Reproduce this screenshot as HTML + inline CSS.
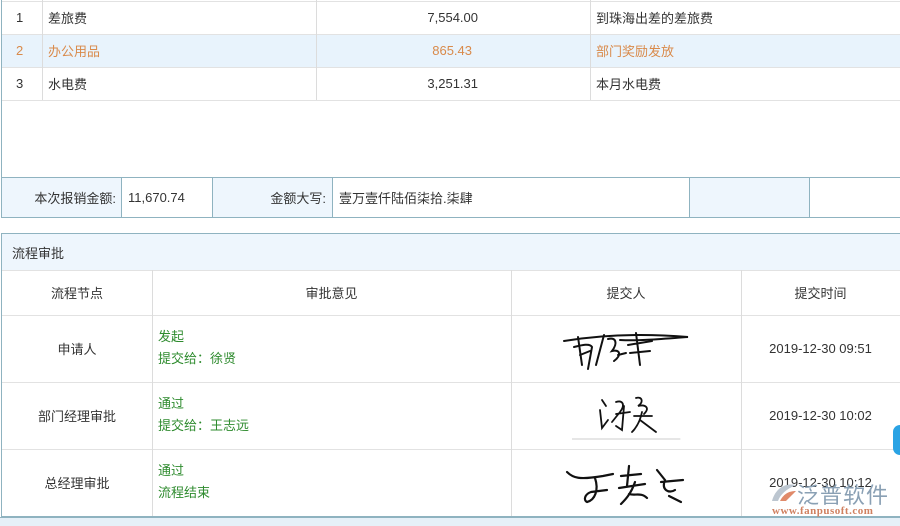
<!DOCTYPE html><html><head><meta charset="utf-8"><style>
*{margin:0;padding:0;box-sizing:border-box}
body{width:900px;height:526px;overflow:hidden;background:#fff;font-family:"Liberation Sans","Noto Sans CJK SC",sans-serif;font-size:13px;color:#333;position:relative}
.a{position:absolute}
.c{position:absolute;display:flex;align-items:center}
.hl{border-left:1px solid #dcdcdc;position:absolute}
.hz{border-top:1px solid #e2e2e2;position:absolute;left:2px;right:0}
.g{color:#2e8b2e;line-height:22px}
</style></head><body>
<!-- outer left border top section -->
<div class="a" style="left:1px;top:0;width:1px;height:217px;background:#8fb3c0"></div>
<div class="hz" style="top:1px"></div>
<div class="a" style="left:2px;top:34px;right:0;height:33px;background:#e8f3fc"></div>
<div class="hz" style="top:34px"></div><div class="hz" style="top:67px"></div><div class="hz" style="top:100px"></div>
<div class="hl" style="left:42px;top:0;height:100px"></div>
<div class="hl" style="left:316px;top:0;height:100px"></div>
<div class="hl" style="left:590px;top:0;height:100px"></div>
<div class="c" style="left:16px;top:1px;height:33px">1</div>
<div class="c" style="left:48px;top:1px;height:33px">差旅费</div>
<div class="c" style="left:316px;width:162px;justify-content:flex-end;top:1px;height:33px">7,554.00</div>
<div class="c" style="left:596px;top:1px;height:33px">到珠海出差的差旅费</div>
<div class="c" style="left:16px;top:34px;height:33px;color:#d98a4a">2</div>
<div class="c" style="left:48px;top:34px;height:33px;color:#d98a4a">办公用品</div>
<div class="c" style="left:316px;width:156px;justify-content:flex-end;top:34px;height:33px;color:#d98a4a">865.43</div>
<div class="c" style="left:596px;top:34px;height:33px;color:#d98a4a">部门奖励发放</div>
<div class="c" style="left:16px;top:67px;height:33px">3</div>
<div class="c" style="left:48px;top:67px;height:33px">水电费</div>
<div class="c" style="left:316px;width:162px;justify-content:flex-end;top:67px;height:33px">3,251.31</div>
<div class="c" style="left:596px;top:67px;height:33px">本月水电费</div>
<!-- summary -->
<div class="a" style="left:1px;top:177px;width:899px;height:41px;border:1px solid #8fb3c0;border-right:none;background:#fff"></div>
<div class="a" style="left:2px;top:178px;width:119px;height:39px;background:#eef6fd"></div>
<div class="a" style="left:212px;top:178px;width:120px;height:39px;background:#eef6fd"></div>
<div class="a" style="left:689px;top:178px;width:120px;height:39px;background:#eef6fd"></div>
<div class="a" style="left:121px;top:178px;width:1px;height:39px;background:#8fb3c0"></div>
<div class="a" style="left:212px;top:178px;width:1px;height:39px;background:#8fb3c0"></div>
<div class="a" style="left:332px;top:178px;width:1px;height:39px;background:#8fb3c0"></div>
<div class="a" style="left:689px;top:178px;width:1px;height:39px;background:#8fb3c0"></div>
<div class="a" style="left:809px;top:178px;width:1px;height:39px;background:#8fb3c0"></div>
<div class="c" style="left:2px;width:114px;justify-content:flex-end;top:178px;height:39px">本次报销金额:</div>
<div class="c" style="left:128px;top:178px;height:39px">11,670.74</div>
<div class="c" style="left:212px;width:114px;justify-content:flex-end;top:178px;height:39px">金额大写:</div>
<div class="c" style="left:339px;top:178px;height:39px">壹万壹仟陆佰柒拾.柒肆</div>
<!-- approval -->
<div class="a" style="left:1px;top:233px;width:899px;height:284px;border:1px solid #8fb3c0;border-right:none"></div>
<div class="a" style="left:2px;top:234px;right:0;height:36px;background:#eef6fd"></div>
<div class="c" style="left:12px;top:234px;height:36px">流程审批</div>
<div class="hz" style="top:270px"></div><div class="hz" style="top:315px"></div><div class="hz" style="top:382px"></div><div class="hz" style="top:449px"></div>
<div class="hl" style="left:152px;top:270px;height:246px"></div>
<div class="hl" style="left:511px;top:270px;height:246px"></div>
<div class="hl" style="left:741px;top:270px;height:246px"></div>
<div class="c" style="left:2px;width:150px;justify-content:center;top:270px;height:45px">流程节点</div>
<div class="c" style="left:152px;width:359px;justify-content:center;top:270px;height:45px">审批意见</div>
<div class="c" style="left:511px;width:230px;justify-content:center;top:270px;height:45px">提交人</div>
<div class="c" style="left:741px;width:159px;justify-content:center;top:270px;height:45px">提交时间</div>
<div class="c" style="left:2px;width:150px;justify-content:center;top:315px;height:67px">申请人</div>
<div class="c" style="left:2px;width:150px;justify-content:center;top:382px;height:67px">部门经理审批</div>
<div class="c" style="left:2px;width:150px;justify-content:center;top:449px;height:67px">总经理审批</div>
<div class="a g" style="left:158px;top:326px">发起<br>提交给：徐贤</div>
<div class="a g" style="left:158px;top:393px">通过<br>提交给：王志远</div>
<div class="a g" style="left:158px;top:460px">通过<br>流程结束</div>
<div class="c" style="left:741px;width:159px;justify-content:center;top:315px;height:67px">2019-12-30 09:51</div>
<div class="c" style="left:741px;width:159px;justify-content:center;top:382px;height:67px">2019-12-30 10:02</div>
<div class="c" style="left:741px;width:159px;justify-content:center;top:449px;height:67px">2019-12-30 10:12</div>
<svg class="a" style="left:560px;top:325px" width="140" height="50" fill="none" stroke="#111" stroke-width="2" stroke-linecap="round">
<path d="M4 16 C40 10 80 8 128 12 C100 14 80 16 60 15"/><path d="M18 12 L22 40 M14 22 C22 20 30 18 32 22 L28 44 M20 30 L30 26"/><path d="M44 10 L36 40 M48 14 C56 12 58 18 52 26 C60 24 62 30 54 36 M58 30 L66 28"/><path d="M76 8 L80 40 M68 20 L92 16 M70 28 L90 26"/>
</svg>
<svg class="a" style="left:572px;top:392px" width="110" height="50" fill="none" stroke="#111" stroke-width="1.8" stroke-linecap="round">
<path d="M30 8 L34 14 M28 18 L30 36 L36 28"/><path d="M44 10 C50 8 54 12 48 20 L40 30 M44 22 L58 20 M52 14 L50 38 L44 34"/><path d="M64 6 C70 4 72 10 66 14 C74 12 78 16 72 22 M62 24 L80 24 M70 20 C68 30 64 36 60 40 M68 28 L84 40"/>
<path d="M0 47 L108 47" stroke="#ccc" stroke-width="1"/></svg>
<svg class="a" style="left:565px;top:460px" width="130" height="50" fill="none" stroke="#111" stroke-width="2.2" stroke-linecap="round">
<path d="M2 12 C8 18 14 20 38 16 L48 14 M30 18 C34 30 30 40 22 42 C18 40 20 34 26 32 L42 30"/><path d="M56 16 L76 14 M64 6 L62 26 M54 28 L80 24 M70 22 C66 34 60 40 56 44 M64 34 C70 36 76 32 82 38"/><path d="M92 10 L100 20 C96 30 104 34 110 30 M96 22 L118 20 M104 36 L116 42"/>
</svg>
<!-- watermark -->
<div class="a" style="left:893px;top:425px;width:14px;height:30px;border-radius:10px;background:#2aa3e4"></div>
<svg class="a" style="left:770px;top:481px" width="28" height="22"><path d="M2 20 C6 6 16 2 26 4 C16 8 10 14 8 20Z" fill="#bcc6d0"/><path d="M10 20 C14 12 20 10 26 10 C22 14 18 18 16 20Z" fill="#e08a6a"/></svg>
<div class="a" style="left:797px;top:478px;font-size:22px;color:#8aa0b4;letter-spacing:1px">泛普软件</div>
<div class="a" style="left:772px;top:505px;font-size:11px;color:#d08060;font-family:'Liberation Serif',serif;font-weight:bold;letter-spacing:0.5px">www.fanpusoft.com</div>
<div class="a" style="left:0;top:517px;width:900px;height:9px;background:#e6f0f8;border-top:1px solid #8fb3c0"></div>
</body></html>
